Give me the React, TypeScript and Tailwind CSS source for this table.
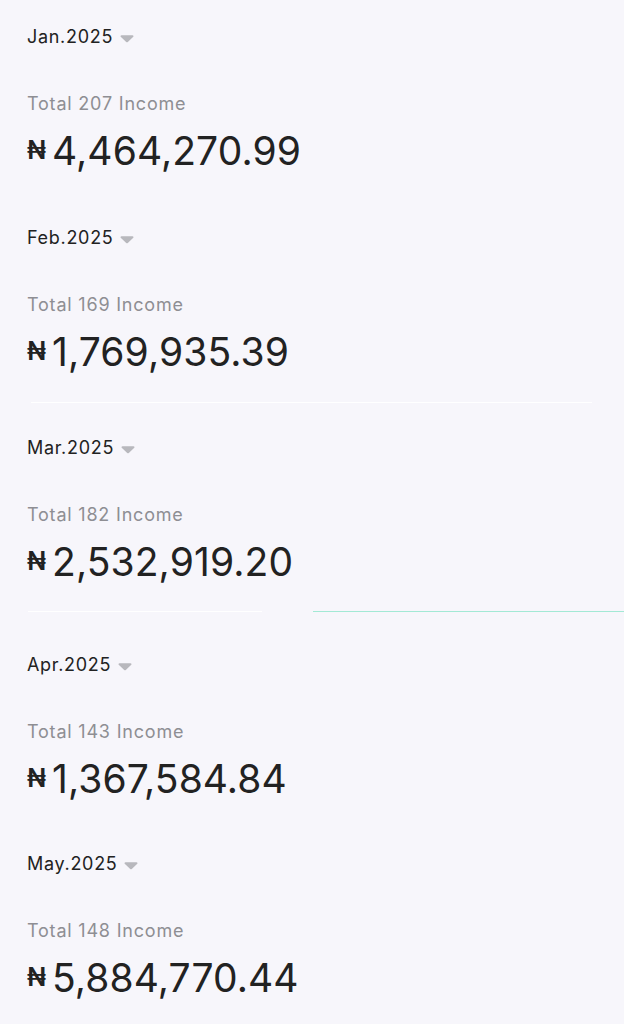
const months = [
  { label: "Jan.2025", count: 207, amount: "4,464,270.99", top: "mt-[25px]" },
  { label: "Feb.2025", count: 169, amount: "1,769,935.39", top: "mt-[54px]" },
  { label: "Mar.2025", count: 182, amount: "2,532,919.20", top: "mt-[33px]" },
  { label: "Apr.2025", count: 143, amount: "1,367,584.84", top: "mt-[41px]" },
  { label: "May.2025", count: 148, amount: "5,884,770.44", top: "mt-[52px]" },
];

export default function App() {
  return (
    <div
      className="min-h-[1024px] w-[624px] overflow-hidden bg-[#f7f6fb] text-[#222222]"
      style={{ fontFamily: "Inter, 'Noto Sans', sans-serif" }}
    >
      <MonthBlock {...months[0]} />
      <MonthBlock {...months[1]} />
      <div className="mt-[29px] ml-[31px] h-px w-[561px] bg-white" />
      <MonthBlock {...months[2]} />
      <div className="mt-[28px] flex h-px">
        <div className="ml-[28px] w-[234px] bg-white" />
        <div className="ml-[51px] flex-1 bg-[#a3e9d5]" />
      </div>
      <MonthBlock {...months[3]} />
      <MonthBlock {...months[4]} />
    </div>
  );
}

function MonthBlock({
  label,
  count,
  amount,
  top,
}: {
  label: string;
  count: number;
  amount: string;
  top: string;
}) {
  return (
    <div className={`${top} px-[27px]`}>
      <div className="flex h-6 items-center gap-[7px]">
        <span className="text-[18px] leading-6 tracking-[0.7px] text-[#222222]">{label}</span>
        <svg width="14" height="9" viewBox="0 0 14 9" className="mt-[2px]">
          <path d="M1.5 1.2h11a1 1 0 0 1 .8 1.6l-5.5 5.2a1.2 1.2 0 0 1-1.6 0L.7 2.8A1 1 0 0 1 1.5 1.2z" fill="#b8b8bd" />
        </svg>
      </div>
      <p className="mt-[43px] text-[18px] leading-6 tracking-[0.8px] text-[#8e8e93]">
        Total {count} Income
      </p>
      <div className="mt-[12px] flex h-11 items-center gap-[6px]">
        <span className="text-[25px] font-semibold leading-none">₦</span>
        <span className="text-[39px] leading-none tracking-[0.1px]">{amount}</span>
      </div>
    </div>
  );
}
